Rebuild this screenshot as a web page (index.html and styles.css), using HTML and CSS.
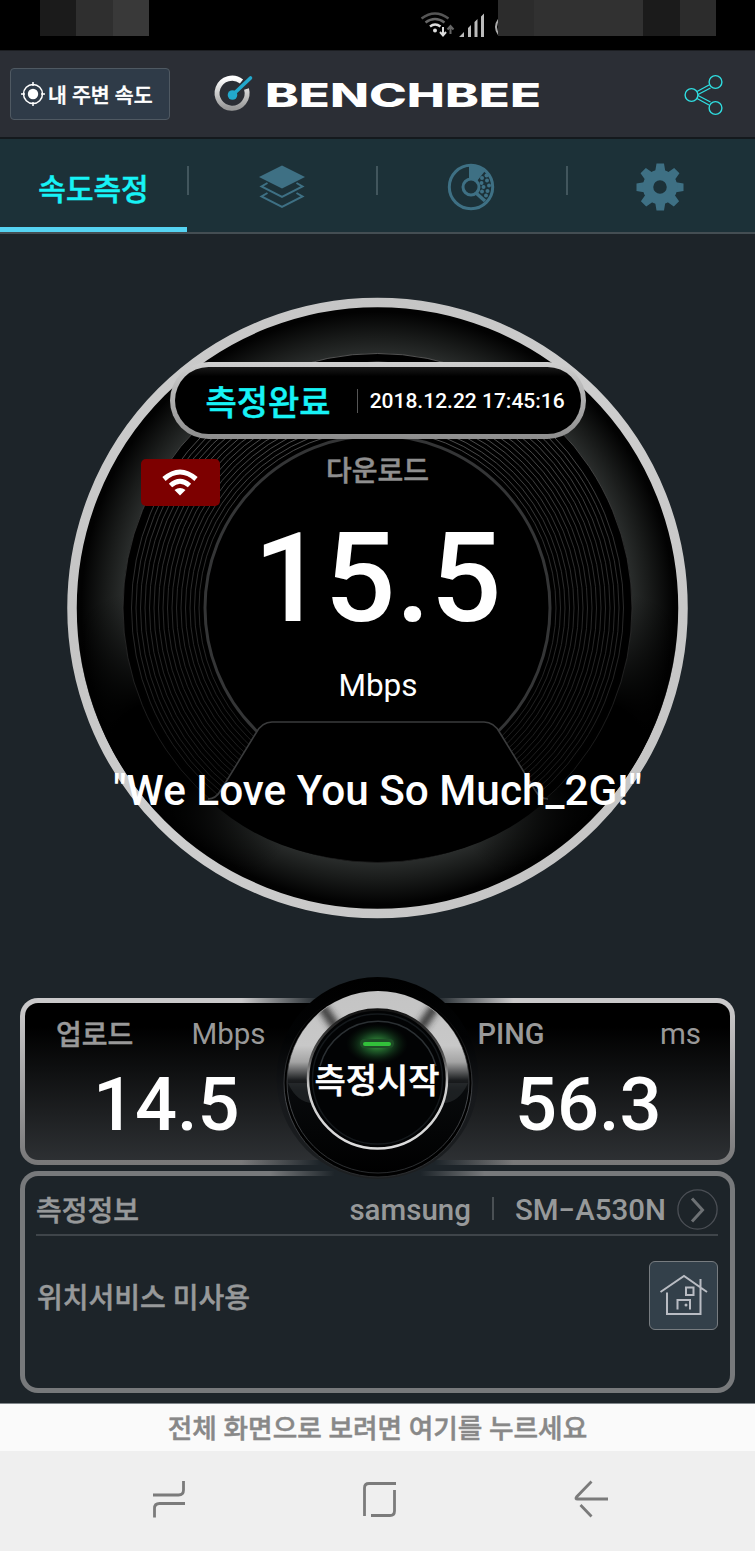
FILE: index.html
```html
<!DOCTYPE html>
<html lang="ko">
<head>
    <meta charset="UTF-8" />
    <meta name="viewport" content="width=device-width, initial-scale=1.0" />
    <title>BENCHBEE</title>
    <link rel="stylesheet" href="styles.css">
</head>
<body>
    <div class="status-bar">
        <svg width="755" height="50" viewBox="0 0 755 50">
            <path fill="#1b1b1b" d="M40 0h36v36H40z" />
            <path fill="#2f2f2f" d="M76 0h37v36H76z" />
            <path fill="#393939" d="M113 0h36v36h-36z" />
            <g fill="none" stroke-width="2.4">
                <path stroke="#555" d="M421.500 18.500q13.500-10 27 0" />
                <path stroke="#666" d="M425.500 22.500q9.500-7 19 0" />
                <path stroke="#ddd" d="M430 26.500q5-4 10.500 0" />
                <path stroke="#ddd" stroke-width="2" d="M443 27v8M440 32l3 3.500 3-3.500" />
                <path stroke="#666" stroke-width="2" d="M450.500 34v-7M447.500 29.500l3-3.500 3 3.500" />
            </g>
            <circle cx="435" cy="30.500" r="2" fill="#ddd" />
            <path fill="#bbb" d="M459 37l5-5v5zM468 28l3-3v12h-3zM474.500 22l3-3v18h-3zM481 16.500l3-3V37h-3z" />
            <path fill="none" stroke="#aaa" stroke-width="2" d="M499 19q-6 8 0 16" />
            <path fill="#2c2c2c" d="M498 0h218v36H498z" />
            <path fill="#313131" d="M534 0h109v36H534z" />
            <path fill="#1b1b1b" d="M643 0h37v36h-37z" />
        </svg>
    </div>

    <header class="header">
        <button class="nearby-button">
            <svg width="24" height="24" viewBox="0 0 24 24">
                <circle cx="12" cy="12" r="9.500" fill="none" stroke="#fff" stroke-width="1.500" />
                <circle cx="12" cy="12" r="5.200" fill="#fff" />
                <path stroke="#fff" stroke-width="1.500" d="M12 0v4M12 20v4M0 12h4M20 12h4" />
            </svg>
            <span class="ko">내 주변 속도</span>
        </button>
        <svg class="logo" width="330" height="44" viewBox="0 0 330 44">
            <defs>
                <linearGradient id="silver" x1="0" y1="0" x2="0" y2="1">
                    <stop offset="0" stop-color="#fff" />
                    <stop offset="1" stop-color="#999" />
                </linearGradient>
            </defs>
            <path fill="none" stroke="url(#silver)" stroke-width="5" d="M29.500 9.500A15 15 0 1 0 34.500 17" />
            <path stroke="#22a8cc" stroke-width="3.600" stroke-linecap="round" d="M20.500 23L38.500 6" />
            <circle cx="20.500" cy="23" r="4.800" fill="#22a8cc" />
            <text class="logo-text" x="53" y="35" textLength="276" lengthAdjust="spacingAndGlyphs">BENCHBEE</text>
        </svg>
        <svg class="share" width="42" height="44" viewBox="0 0 42 44">
            <g fill="none" stroke="#2fdde0" stroke-width="1.400">
                <path d="M14 19.500L26 13M15 22.500L27.500 16M15 23.500L27.500 30M14 26.500L26 33" />
                <circle cx="8.500" cy="23" r="6.400" />
                <circle cx="32.500" cy="10" r="6.400" />
                <circle cx="32.500" cy="36" r="6.400" />
            </g>
        </svg>
    </header>

    <nav class="tabs">
        <div class="tab active ko">속도측정</div>
        <div class="tab">
            <svg width="48" height="48" viewBox="0 0 48 48">
                <path fill="#3e7084" d="M24 2.500L47 14 24 25.500 1 14z" />
                <path fill="none" stroke="#3e7084" stroke-width="2" d="M9.500 20L3.500 23.500 24 34l20.500-10.500-6-3.500M9.500 30L3.500 33.500 24 44l20.500-10.500-6-3.500" />
            </svg>
        </div>
        <div class="tab">
            <svg width="48" height="48" viewBox="0 0 48 48">
                <circle cx="24" cy="24" r="21.700" fill="none" stroke="#3e7084" stroke-width="3" />
                <circle cx="24" cy="24" r="8" fill="none" stroke="#3e7084" stroke-width="3" />
                <path fill="#3e7084" d="M22 3q9-1 16 5l-8 10q-3-2.500-8-2.500z" />
                <path stroke="#3e7084" stroke-width="3.500" d="M29 30l9 8" />
                <g fill="#3e7084">
                    <circle cx="35" cy="15" r="2" /><circle cx="39.500" cy="12.500" r="2" />
                    <circle cx="34.500" cy="20" r="2" /><circle cx="40" cy="17.500" r="2" />
                    <circle cx="36.500" cy="24" r="2" /><circle cx="42" cy="22.500" r="2" />
                    <circle cx="35" cy="28.500" r="2" /><circle cx="40.500" cy="28" r="2" />
                    <circle cx="39" cy="32.500" r="2" />
                </g>
            </svg>
        </div>
        <div class="tab">
            <svg width="48" height="48" viewBox="0 0 48 48">
                <g fill="#3e7084">
                    <path id="tooth" d="M20.500.500h7.500l1.500 9h-10.500zM20.500 47.500h7.500l1.500-9h-10.500z" />
                    <use href="#tooth" transform="rotate(45 24 24)" />
                    <use href="#tooth" transform="rotate(90 24 24)" />
                    <use href="#tooth" transform="rotate(135 24 24)" />
                </g>
                <circle cx="24" cy="24" r="12" fill="none" stroke="#3e7084" stroke-width="10.500" />
            </svg>
        </div>
    </nav>

    <main class="gauge">
        <svg class="gauge-dial" width="755" height="764" viewBox="0 234 755 764">
            <defs>
                <linearGradient id="rim" x1="0" y1="0" x2="1" y2="1">
                    <stop offset="0" stop-color="#d2d2d2" />
                    <stop offset=".25" stop-color="#c4c4c4" />
                    <stop offset=".5" stop-color="#cecece" />
                    <stop offset="1" stop-color="#c2c2c2" />
                </linearGradient>
                <radialGradient id="glow">
                    <stop offset=".83" stop-color="#2a2d2c" />
                    <stop offset=".89" stop-color="#191b1a" />
                    <stop offset=".97" stop-color="#020202" />
                </radialGradient>
                <radialGradient id="shade">
                    <stop offset=".3" stop-color="#000" />
                    <stop offset="1" stop-color="#000" stop-opacity="0" />
                </radialGradient>
                <linearGradient id="fade" gradientUnits="userSpaceOnUse" x1="0" y1="400" x2="0" y2="800">
                    <stop offset="0" stop-color="#626262" />
                    <stop offset=".35" stop-color="#353535" />
                    <stop offset="1" stop-color="#1c1c1c" />
                </linearGradient>
                <clipPath id="face"><circle cx="377.500" cy="608" r="301" /></clipPath>
            </defs>
            <circle cx="377.500" cy="608" r="305.500" fill="url(#glow)" stroke="url(#rim)" stroke-width="9.500" />
            <g clip-path="url(#face)">
                <circle cx="158" cy="750" r="160" fill="url(#shade)" />
                <circle cx="597" cy="750" r="160" fill="url(#shade)" />
            </g>
            <circle cx="377.500" cy="608" r="254.500" fill="#000" stroke="url(#fade)" stroke-width=".8" />
            <!-- grooves -->
            <g fill="none" stroke="url(#fade)" stroke-width=".9">
                <circle cx="377.500" cy="608" r="246" />
                <circle cx="377.500" cy="608" r="241.500" />
                <circle cx="377.500" cy="608" r="237" />
                <circle cx="377.500" cy="608" r="232.500" />
                <circle cx="377.500" cy="608" r="228" />
                <circle cx="377.500" cy="608" r="223.500" />
                <circle cx="377.500" cy="608" r="219" />
                <circle cx="377.500" cy="608" r="214.500" />
                <circle cx="377.500" cy="608" r="210" />
                <circle cx="377.500" cy="608" r="205.500" />
                <circle cx="377.500" cy="608" r="201" />
                <circle cx="377.500" cy="608" r="196.500" />
                <circle cx="377.500" cy="608" r="192" />
                <circle cx="377.500" cy="608" r="187.500" />
                <circle cx="377.500" cy="608" r="183" />
                <circle cx="377.500" cy="608" r="178.500" />
            </g>
            <circle cx="377.500" cy="608" r="172.500" fill="#000" stroke="#343536" stroke-width="3" />
            <path fill="#000" d="M208 799Q216 799 221 790L256 733Q262 722 272 722H484Q494 722 500 733L535 790Q540 799 548 799Q480 861 377 861T208 799z" />
            <path fill="none" stroke="#3a3b3c" stroke-width="1.600" d="M208 799Q216 799 221 790L256 733Q262 722 272 722H484Q494 722 500 733L535 790Q540 799 548 799" />
        </svg>
        <div class="gauge-content">
            <div class="result-pill">
                <span class="result-state ko">측정완료</span>
                <span class="result-date">2018.12.22 17:45:16</span>
            </div>
            <div class="gauge-label ko">다운로드</div>
            <div class="gauge-value">15.5</div>
            <div class="gauge-unit">Mbps</div>
            <div class="gauge-ssid">"We Love You So Much_2G!"</div>
        </div>
        <div class="wifi-badge">
            <svg width="36" height="28" viewBox="0 0 36 28">
                <path fill="none" stroke="#fff" stroke-width="5" d="M2 10Q18-4 34 10M8.500 16.500Q18 8 27.500 16.500" />
                <path fill="#fff" d="M12.500 21Q18 17 23.500 21L18 26.500z" />
            </svg>
        </div>
    </main>

    <section class="panels">
        <div class="stats">
            <div class="stat">
                <div class="stat-head upload"><b class="ko">업로드</b><span>Mbps</span></div>
                <div class="stat-value">14.5</div>
            </div>
            <div class="stat">
                <div class="stat-head ping"><b>PING</b><span>ms</span></div>
                <div class="stat-value">56.3</div>
            </div>
        </div>
        <div class="info">
            <div class="info-row device">
                <span class="info-title ko">측정정보</span>
                <span class="maker">samsung</span>
                <span class="model">SM−A530N</span>
                <svg width="41" height="41" viewBox="0 0 41 41">
                    <circle cx="20.500" cy="20.500" r="19.600" fill="none" stroke="#4b4f55" stroke-width="1.300" />
                    <path fill="none" stroke="#6d7174" stroke-width="3" d="M15 9.500L25.500 21 15 32.500" />
                </svg>
            </div>
            <div class="info-row location">
                <span class="ko">위치서비스 미사용</span>
                <button class="home-button">
                    <svg width="50" height="44" viewBox="0 0 50 44">
                        <g fill="none" stroke="#b9bcc3" stroke-width="2">
                            <path d="M1.500 19L25 3l23 16M8 19.500V41h33.500V6" />
                            <path d="M18.500 36.500V27H31v9.500M27 14.500h7.500V22H27z" />
                        </g>
                        <circle cx="27" cy="32" r="1.500" fill="#b9bcc3" />
                    </svg>
                </button>
            </div>
        </div>

        <div class="start-button">
            <svg width="210" height="210" viewBox="272 973 210 210">
                <defs>
                    <linearGradient id="metal" x1="0" y1="0" x2="0" y2="1">
                        <stop offset="0" stop-color="#c4c4c4" />
                        <stop offset=".3" stop-color="#c8c8c8" />
                        <stop offset=".39" stop-color="#a4a4a4" />
                        <stop offset=".49" stop-color="#1b1d1f" />
                        <stop offset=".55" stop-color="#080a0c" />
                        <stop offset="1" stop-color="#000" />
                    </linearGradient>
                    <linearGradient id="edge" x1="0" y1="0" x2="0" y2="1">
                        <stop offset="0" stop-color="#111" />
                        <stop offset=".35" stop-color="#555" />
                        <stop offset=".55" stop-color="#ccc" />
                        <stop offset="1" stop-color="#ddd" />
                    </linearGradient>
                    <linearGradient id="outline" x1="0" y1="0" x2="0" y2="1">
                        <stop offset="0" stop-color="#222" stop-opacity="0" />
                        <stop offset=".6" stop-color="#45484c" />
                        <stop offset="1" stop-color="#2a2c2e" />
                    </linearGradient>
                    <linearGradient id="outer" x1="0" y1="0" x2="0" y2="1">
                        <stop offset="0" stop-color="#000" />
                        <stop offset=".3" stop-color="#020304" />
                        <stop offset=".6" stop-color="#16181b" />
                        <stop offset="1" stop-color="#1d2022" />
                    </linearGradient>
                    <radialGradient id="led">
                        <stop offset="0" stop-color="#3faf45" />
                        <stop offset=".5" stop-color="#1e5a2a" stop-opacity=".7" />
                        <stop offset="1" stop-color="#0b2010" stop-opacity="0" />
                    </radialGradient>
                    <filter id="soft"><feGaussianBlur stdDeviation="3.500" /></filter>
                    <clipPath id="ring"><circle cx="378" cy="1082" r="90.500" /></clipPath>
                </defs>
                <circle cx="377.500" cy="1078" r="101" fill="url(#outer)" />
                <circle cx="378" cy="1083" r="94" fill="#000" stroke="url(#outline)" stroke-width="1" />
                <circle cx="378" cy="1082" r="91" fill="url(#metal)" stroke="url(#outline)" stroke-width="1" />
                <g clip-path="url(#ring)">
                    <path stroke="#333" stroke-width="9" filter="url(#soft)" d="M320 1004L338 1030M437 1004L419 1030" />
                    <path fill="#3c4043" opacity=".4" d="M288 1083h20q1 12 5 20-16 0-25-20zM468 1083h-20q-1 12-5 20 16 0 25-20z" />
                </g>
                <circle cx="377.500" cy="1079" r="69.500" fill="#020304" stroke="url(#edge)" stroke-width="2.500" />
                <circle cx="377.500" cy="1079" r="65" fill="none" stroke="#15191c" stroke-width="1.500" />
                <path fill="none" stroke="#2b3033" stroke-width="1.500" d="M320 1066a60 60 0 0 1 116 0" />
                <ellipse cx="377" cy="1044" rx="31" ry="20" fill="url(#led)" />
                <rect x="360" y="1039" width="34" height="9" rx="4.500" fill="#1e4d26" />
                <rect x="363" y="1042" width="28" height="4" rx="2" fill="#32c13a" />
            </svg>
            <span class="start-label ko">측정시작</span>
        </div>
    </section>

    <div class="fullscreen-hint ko">전체 화면으로 보려면 여기를 누르세요</div>

    <footer class="nav-bar">
        <svg width="755" height="100" viewBox="0 1451 755 100">
            <g fill="none" stroke="#7b7b7b" stroke-width="2.800">
                <path d="M183.500 1481v9q0 5-5 5H153M154.500 1517.500v-9q0-5 5-5H185" />
                <path d="M364.500 1516v-28q0-4.500 4.500-4.500H396M394.500 1490v21q0 4.500-4.500 4.500H371" />
                <path d="M591.500 1481.500L576.500 1497q-1.500 2 1 2H608M580.500 1505l11 11.500" />
            </g>
        </svg>
    </footer>
</body>
</html>
```
FILE: styles.css
```css
/* Global Styling */
* {
    box-sizing: border-box;
}

body {
    margin: 0;
    width: 755px;
    height: 1551px;
    background: #1d2429;
    font-family: Roboto, "Noto Sans CJK KR", sans-serif;
    font-weight: 500;
    color: #fff;
    overflow: hidden;
}

svg {
    display: block;
    flex-shrink: 0;
}

button {
    font: inherit;
    color: inherit;
    padding: 0;
}

/* Slightly heavier Korean text */
.ko {
    -webkit-text-stroke: 0.5px currentColor;
}

/* Status bar */
.status-bar {
    height: 50px;
    background: #000;
}

/* Header */
.header {
    display: flex;
    align-items: center;
    height: 89px;
    padding: 0 30px 0 10px;
    background: #2b2e35;
    border-top: 1px solid #1c1e22;
    border-bottom: 2px solid #14191d;
}

.nearby-button {
    display: flex;
    align-items: center;
    gap: 3px;
    width: 160px;
    height: 52px;
    padding-left: 10px;
    background: #2f3b48;
    border: 1px solid #4f5962;
    border-radius: 4px;
    font-size: 20.5px;
    white-space: nowrap;
}

.logo {
    margin-left: 42px;
}

.logo-text {
    font-family: Inter, sans-serif;
    font-size: 33px;
    font-weight: 800;
    fill: #fff;
}

.share {
    margin-left: auto;
}

/* Tabs */
.tabs {
    display: flex;
    height: 95px;
    background: #1c3138;
    border-bottom: 2px solid #444e53;
}

.tab {
    position: relative;
    flex: 1;
    display: flex;
    align-items: center;
    justify-content: center;
    padding-top: 2px;
}

.tab + .tab::before {
    content: "";
    position: absolute;
    left: 0;
    top: 27px;
    width: 2px;
    height: 29px;
    background: #42565d;
}

.tab.active {
    flex: 0 0 187px;
    color: #17f3f6;
    font-size: 30px;
    padding-top: 7px;
    border-bottom: 5px solid #55d3f2;
}

/* Gauge */
.gauge {
    position: relative;
    display: grid;
    height: 764px;
}

.gauge-dial,
.gauge-content {
    grid-area: 1 / 1;
}

.gauge-content {
    display: flex;
    flex-direction: column;
    align-items: center;
    padding-top: 128px;
    z-index: 1;
}

.result-pill {
    display: flex;
    align-items: center;
    width: 416px;
    height: 77px;
    padding-left: 31px;
    border: 5.5px solid transparent;
    border-radius: 39px;
    background: linear-gradient(#191919, #000 14%) padding-box,
                linear-gradient(#cfcfcf, #8d8d8d) border-box;
}

.result-state {
    color: #17f3f6;
    font-size: 34px;
    line-height: 60px;
    padding: 4px 26px 0 0;
}

.result-date {
    padding-left: 12px;
    border-left: 1px solid #555;
    font-size: 21px;
    line-height: 24px;
    white-space: nowrap;
}

.gauge-label {
    height: 62px;
    line-height: 66px;
    font-size: 28px;
    color: #8f8f8f;
}

.gauge-value {
    height: 156px;
    line-height: 156px;
    font-size: 125px;
}

.gauge-unit {
    height: 58px;
    line-height: 58px;
    font-size: 31.5px;
    font-weight: 400;
    padding-left: 1px;
}

.gauge-ssid {
    height: 60px;
    margin-top: 46px;
    line-height: 59px;
    font-size: 42.3px;
    white-space: nowrap;
}

.wifi-badge {
    position: absolute;
    left: 141px;
    top: 225px;
    z-index: 2;
    display: flex;
    align-items: center;
    justify-content: center;
    width: 79px;
    height: 47px;
    padding-right: 2px;
    background: #7d0000;
    border-radius: 5px;
}

/* Panels */
.panels {
    position: relative;
    display: flex;
    flex-direction: column;
    gap: 6px;
    height: 405px;
    padding: 0 20px;
}

.stats {
    display: grid;
    grid-template-columns: 1fr 1fr;
    height: 167px;
    border: 5.5px solid transparent;
    border-radius: 18px;
    background: linear-gradient(#000 15%, #2d3033) padding-box,
                linear-gradient(90deg, transparent 31%, #1d2429 42%, #1d2429 58%, transparent 69%) border-box,
                linear-gradient(#cac9ca 5%, #777778) border-box;
}

.stat-head {
    display: flex;
    justify-content: space-between;
    height: 60px;
    line-height: 63px;
    font-size: 29px;
    color: #999;
}

.stat-head b {
    font-weight: 500;
}

.stat-head span {
    font-size: 29.5px;
    font-weight: 400;
}

.upload {
    padding: 0 112px 0 31px;
}

.upload b {
    font-size: 28px;
    line-height: 66px;
}

.ping {
    padding: 0 29px 0 100px;
}

.stat-value {
    height: 82px;
    line-height: 84px;
    font-size: 74px;
    text-align: center;
}

.stat:first-child .stat-value {
    padding-right: 70px;
}

.stat:last-child .stat-value {
    padding-left: 69px;
}

.info {
    height: 222px;
    padding: 0 12px 0 11px;
    border: 5.5px solid transparent;
    border-radius: 18px;
    background: linear-gradient(#1d2429, #1d2429) padding-box,
                linear-gradient(90deg, transparent 35%, #1d2429 44%, #1d2429 56%, transparent 65%) 0 0 / 100% 10px no-repeat border-box,
                linear-gradient(#77797b, #77797b) border-box;
}

.info-row {
    display: flex;
    align-items: center;
    color: #97999a;
    font-size: 28px;
}

.device {
    height: 60px;
    padding-top: 8px;
    border-bottom: 2px solid #3f454a;
}

.info-title {
    margin-right: auto;
}

.maker,
.model {
    font-size: 29.5px;
    line-height: 34px;
    padding-top: 2px;
}

.maker::after {
    content: "";
    display: inline-block;
    width: 2px;
    height: 23px;
    margin: 0 21px;
    background: #4a5054;
}

.model {
    margin-right: 11px;
}

.location {
    justify-content: space-between;
    height: 118px;
}

.location span {
    padding: 2px 0 0 1px;
}

.home-button {
    display: flex;
    align-items: center;
    justify-content: center;
    width: 69px;
    height: 69px;
    background: #33404a;
    border: 1.5px solid #777c80;
    border-radius: 6px;
}

/* Start button sits on top of both panels */
.start-button {
    position: absolute;
    left: 272px;
    top: -25px;
    display: grid;
    place-items: center;
}

.start-button > * {
    grid-area: 1 / 1;
}

.start-label {
    font-size: 34px;
    line-height: 40px;
    padding-top: 5px;
    white-space: nowrap;
}

/* Bottom */
.fullscreen-hint {
    height: 48px;
    line-height: 50px;
    background: #fafafa;
    border-top: 1px solid #80868a;
    color: #888;
    font-size: 26.7px;
    text-align: center;
}

.nav-bar {
    height: 100px;
    background: #efefef;
}
```
